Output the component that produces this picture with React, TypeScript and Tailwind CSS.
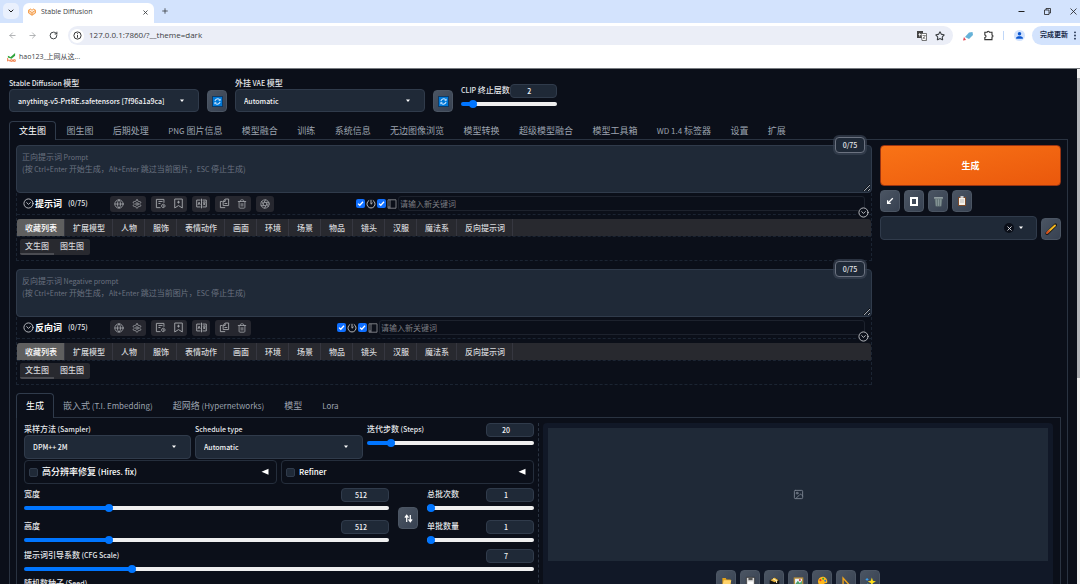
import { Fragment, useState, type ReactNode } from "react";
import { LuGlobe, LuSettings, LuImage, LuChevronDown, LuTrash2, LuAperture } from "react-icons/lu";
import { Star, RotateCw, ArrowLeft, ArrowRight, X, Plus, CircleChevronDown } from "lucide-react";

const secondary =
  "flex h-[22px] w-5 shrink-0 items-center justify-center rounded-[4px] border border-[#4b5563] bg-gradient-to-br from-[#4b5563] to-[#374151] text-white";

/** Sets Latin runs one step smaller than the Chinese text around them. */
function Mixed({ text, latin = "text-[7px]" }: { text: string; latin?: string }) {
  return (
    <>
      {text.split(/([\x20-\x7e]{2,})/).map((run, i) =>
        i % 2 ? <span key={i} className={latin}>{run}</span> : <Fragment key={i}>{run}</Fragment>,
      )}
    </>
  );
}

function Select({ label, value, className = "", height = "h-6" }: { label: string; value: string; className?: string; height?: string }) {
  return (
    <label className={`flex flex-col text-[8px] leading-[12px] text-[#e5e7eb] ${className}`}>
      <span className="font-medium"><Mixed text={label} /></span>
      <span className="relative block">
        <select className={`block w-full appearance-none rounded-[4px] border border-[#303b4b] bg-[#1f2937] pl-2 text-[7px] font-medium text-[#f3f4f6] ${height}`}>
          <option>{value}</option>
        </select>
        <Caret className="pointer-events-none absolute top-[10px] right-[14px]" />
      </span>
    </label>
  );
}

function Caret({ className = "" }: { className?: string }) {
  return (
    <svg viewBox="0 0 6 4" className={`h-1 w-[6px] ${className}`}>
      <path d="M1 .5h4L3 3z" fill="#fff" />
    </svg>
  );
}

function Range({ label, initial, min, max }: { label: string; initial: number; min: number; max: number }) {
  const [value, setValue] = useState(initial);
  const pct = ((value - min) / (max - min)) * 100;
  return (
    <input
      type="range"
      aria-label={label}
      min={min}
      max={max}
      value={value}
      onChange={(e) => setValue(Number(e.target.value))}
      style={{ backgroundImage: `linear-gradient(to right, #0075ff ${pct}%, #efefef ${pct}%)` }}
      className="block h-1 w-full appearance-none rounded-full [&::-webkit-slider-thumb]:size-2 [&::-webkit-slider-thumb]:appearance-none [&::-webkit-slider-thumb]:rounded-full [&::-webkit-slider-thumb]:bg-[#0075ff]"
    />
  );
}

function Slider({ label, value, min, max }: { label: string; value: number; min: number; max: number }) {
  return (
    <div className="flex flex-col gap-1">
      <div className="flex items-start justify-between">
        <span className="shrink-0 text-[8px] leading-[11px] font-medium whitespace-nowrap text-[#e5e7eb]"><Mixed text={label} /></span>
        <input
          aria-label={label}
          defaultValue={value}
          className="h-[14px] w-12 min-w-0 rounded-[4px] border border-[#303b4b] bg-[#1f2937] pr-2 text-center text-[7px] font-medium text-[#f3f4f6]"
        />
      </div>
      <Range label={label} initial={value} min={min} max={max} />
    </div>
  );
}

function RefreshEmoji() {
  return (
    <svg viewBox="0 0 12 12" className="size-[11px]">
      <rect x=".5" y=".5" width="11" height="11" fill="#0078d7" stroke="#10375f" />
      <path d="M3.2 5.5A3 3 0 0 1 8.300 4M8.800 6.500A3 3 0 0 1 3.700 8" fill="none" stroke="#cfe8ff" strokeWidth="1.2" />
      <path d="M9.400 2.600v2.600H6.800zM2.600 9.400V6.800h2.600z" fill="#cfe8ff" />
    </svg>
  );
}

const mainTabs = ["文生图", "图生图", "后期处理", "PNG 图片信息", "模型融合", "训练", "系统信息", "无边图像浏览", "模型转换", "超级模型融合", "模型工具箱", "WD 1.4 标签器", "设置", "扩展"];
const categories = ["收藏列表", "扩展模型", "人物", "服饰", "表情动作", "画面", "环境", "场景", "物品", "镜头", "汉服", "魔法系", "反向提示词"];

function IconGroup({ children }: { children: ReactNode }) {
  return <div className="flex h-4 items-center rounded-[3px] bg-[#26272f] text-[#a0a2a7]">{children}</div>;
}

function IconButton({ label, children }: { label: string; children: ReactNode }) {
  return (
    <button aria-label={label} className="flex h-4 w-[18px] items-center justify-center">
      {children}
    </button>
  );
}

function Glyph({ d }: { d: string }) {
  return (
    <svg viewBox="0 0 16 16" className="size-[11px]" fill="none" stroke="currentColor" strokeWidth="1.400">
      <path d={d} />
    </svg>
  );
}

function Tick({ label }: { label: string }) {
  return (
    <span className="relative block size-[9px]">
      <input type="checkbox" defaultChecked aria-label={label} className="block size-[9px] appearance-none rounded-[2px] bg-[#0f6fff]" />
      <svg viewBox="0 0 9 9" className="pointer-events-none absolute inset-0 size-[9px]">
        <path d="M2 4.6 3.8 6.3 7 2.8" fill="none" stroke="#fff" strokeWidth="1.3" />
      </svg>
    </span>
  );
}

const promptHint = "(按 Ctrl+Enter 开始生成，Alt+Enter 跳过当前图片，ESC 停止生成)";

function PromptBlock({ title, hint, extra, inputWidth }: { title: string; hint: string; extra?: boolean; inputWidth: string }) {
  return (
    <section className="relative">
      <div className="relative">
        <textarea
          aria-label={hint}
          placeholder=" "
          className="peer block h-12 w-full resize rounded-[4px] border border-[#303b4b] bg-[#1f2937] px-[5px] py-[5px] text-[8px] leading-[12px]"
        />
        <div className="pointer-events-none absolute top-[6px] left-[6px] hidden text-[8px] leading-[12px] text-[#6b7280] peer-placeholder-shown:block">
          <p><Mixed text={hint} /></p>
          <p><Mixed text={promptHint} /></p>
        </div>
      </div>
      <span className="absolute -top-2 right-[7px] flex h-4 w-[30px] items-center justify-center rounded-[4px] border border-[#6b7280] bg-[#1f2937] text-[7px] font-medium text-[#e5e7eb] ring-2 ring-[#374151]/70">
        0/75
      </span>
      <div className="border-x border-b border-dashed border-[#1b2432]">
        <div className="relative flex h-[22px] items-center justify-between border-b border-dashed border-[#1b2432] pr-[6px] pl-[6px]">
          <div className="flex items-center">
            <CircleChevronDown className="size-[11px] text-[#c4c6ca]" strokeWidth={2} />
            <h2 className="pl-px text-[9px] leading-4 font-bold text-white">{title}</h2>
            <span className="w-12 pl-[6px] text-[7px] font-medium text-[#e5e7eb]">(0/75)</span>
            <div className="flex gap-[5px]">
              <IconGroup>
                <IconButton label="语言"><LuGlobe className="size-[10px]" /></IconButton>
                <IconButton label="设置"><LuSettings className="size-[10px]" /></IconButton>
              </IconGroup>
              <IconGroup>
                <IconButton label="历史"><Glyph d="M8 14H2V2h11v5M5 5h6M5 8h3M12 9a2.500 2.500 0 1 0 .1 0M12 10.500v1.500h1.500" /></IconButton>
                <IconButton label="收藏"><Glyph d="M2.500 14.500V1.500h11v13L8 11zM8 4v4M6 6h4" /></IconButton>
              </IconGroup>
              <IconGroup>
                <IconButton label="翻译"><Glyph d="M6.500 3H1v10h5.500M9.500 3H15v10H9.500M8 1v14M3 10l1.500-4L6 10M10 6h4M12 5v1M10.500 10.500 13.500 7M10.500 7l3 3.500" /></IconButton>
              </IconGroup>
              <IconGroup>
                <IconButton label="复制"><Glyph d="M5 5H2v9h7M6 11V5l3-3.500h5V11zM9 2v3H6M8 8h4" /></IconButton>
                <IconButton label="清空"><LuTrash2 className="size-[10px]" /></IconButton>
              </IconGroup>
              {extra && (
                <IconGroup>
                  <IconButton label="生成提示词"><LuAperture className="size-[10px]" /></IconButton>
                </IconGroup>
              )}
            </div>
          </div>
          <div className={`flex items-center gap-px ${inputWidth}`}>
            <Tick label="自动翻译" />
            <svg viewBox="0 0 10 10" className="size-[10px] shrink-0" fill="none" stroke="#b5b7ba">
              <path d="M3.200 1.400a4 4 0 1 0 3.600 0M5 .8v4.400l1.600-1.400" strokeWidth="1" />
            </svg>
            <Tick label="自动补全" />
            <svg viewBox="0 0 10 10" className="size-[10px] shrink-0" fill="none" stroke="#85878c">
              <path d="M1 .8h8v8.400H1zM3 .8v8.400M1 8h2" strokeWidth=".9" />
            </svg>
            <input
              aria-label="新关键词"
              placeholder="请输入新关键词"
              className="h-[15px] min-w-0 flex-1 rounded-[3px] border border-[#1d222d] bg-transparent px-px text-[8px] placeholder:text-[#7b7d82]"
            />
          </div>
          <button aria-label="展开" className="absolute right-[2px] -bottom-1 rounded-full bg-[#0b0f19]">
            <CircleChevronDown className="size-[11px] text-[#c4c6ca]" strokeWidth={2} />
          </button>
        </div>
        <div className="mt-1 flex h-[17px] overflow-hidden rounded-t-[3px] bg-[#28292f] text-[8px] font-medium text-[#d6d7da]">
          {categories.map((c, i) => (
            <button key={c} className={`border-r border-[#363740] pr-[7px] pl-2 whitespace-nowrap ${i === 0 ? "bg-[#5f5f5f] text-white" : ""}`}>
              {c}
            </button>
          ))}
        </div>
        <div className="border-t border-dashed border-[#1b2432] px-[3px] pt-[2px] pb-[5px]">
          <div className="flex w-max overflow-hidden rounded-[2px] bg-[#28292f] text-[8px] font-medium text-[#d6d7da]">
            <button className="h-4 border-b-2 border-[#4b4c52] px-[5px] leading-[14px]">文生图</button>
            <button className="h-4 border-b-2 border-transparent px-[6px] leading-[14px]">图生图</button>
          </div>
        </div>
      </div>
    </section>
  );
}

function Accordion({ title }: { title: string }) {
  return (
    <div className="flex h-6 items-center rounded-[4px] border border-[#252e3c] px-1">
      <label className="flex flex-1 items-center gap-1 text-[9px] leading-4 font-medium text-white">
        <input type="checkbox" className="size-[9px] appearance-none rounded-[2px] border border-[#303b4b] bg-[#1f2937]" />
        <span><Mixed text={title} latin="text-[8px]" /></span>
      </label>
      <button aria-label={`展开 ${title}`} className="pr-[3px]">
        <svg viewBox="0 0 8 8" className="size-2"><path d="M7.500.8v6L.5 3.800z" fill="#fff" /></svg>
      </button>
    </div>
  );
}

const outputTools: { label: string; icon: ReactNode }[] = [
  { label: "打开文件夹", icon: <><path d="M2 3h5l1 2h6v9H2z" fill="#e3a21a" /><path d="M4 6h11l-2 8H2z" fill="#ffd36b" /></> },
  { label: "保存", icon: <><path d="M2 2h12v13H2z" fill="#d9d9d9" stroke="#222" /><path d="M5 2h6v4H5z" fill="#555" /><path d="M4 8h8v6H4z" fill="#fff" /></> },
  { label: "保存压缩包", icon: <><path d="M1 6l7-4 7 4v8H1z" fill="#161616" /><path d="M2 6l6-4 6 4-6 3z" fill="#e5b23a" /><path d="M6 4l5 3v3" stroke="#fff0bd" strokeWidth="1.5" fill="none" /></> },
  { label: "图生图", icon: <><path d="M1 2h14v13H1z" fill="#b98f3c" /><path d="M3 4h10v9H3z" fill="#e8f4fa" /><path d="M3 12l4-5 3 3 3-3v6H3z" fill="#4ea06a" /><circle cx="10" cy="6" r="1.5" fill="#d84b4b" /></> },
  { label: "局部重绘", icon: <><path d="M8 1a7 7 0 1 0 1 14c2 0 0-3 2-4s4 0 4-3c0-4-3-7-7-7z" fill="#ffb71b" /><circle cx="5" cy="6" r="1.5" fill="#d9352b" /><circle cx="9" cy="4" r="1.4" fill="#2e9e46" /><circle cx="12" cy="7" r="1.4" fill="#1e78d6" /></> },
  { label: "后期处理", icon: <path d="M3 3v11h10z" fill="none" stroke="#f0a51c" strokeWidth="2" /> },
  { label: "高清修复", icon: <><path d="M10 2l1.5 5L16 8l-4.500 2L10 15l-1.500-5L4 8l4.500-1z" fill="#ffdf1b" /><path d="M3 3v4M1 5h4" stroke="#3aa0ee" strokeWidth="1.500" /><circle cx="4" cy="12" r="1.200" fill="#3ac1ee" /></> },
];

function BrowserChrome() {
  return (
    <header className="shrink-0 border-b border-[#777b80] bg-white font-['Open_Sans','Noto_Sans_CJK_SC',sans-serif] text-[#3c4043]">
      <div className="flex h-[23px] items-start bg-[#d3e3fd]">
        <button aria-label="搜索标签页" className="mt-[3px] ml-[3px] flex size-4 items-center justify-center rounded-[5px] bg-[#e9f0fd] text-[#1f1f1f]">
          <LuChevronDown className="size-[8px]" strokeWidth={3} />
        </button>
        <div className="mt-[3px] ml-1 flex h-5 w-[131px] items-center rounded-t-[6px] bg-white px-[5px] pb-[2px]">
          <svg viewBox="0 0 16 16" className="size-[8px] shrink-0" fill="#fbd3ae" stroke="#f39a45" strokeWidth="1.800">
            <path d="M1 4.500 5 2l3 2.500L11 2l4 2.500v5.500L8 14.500 1 10zM1 4.500l7 4.500 7-4.500M8 9v5.500" />
          </svg>
          <span className="flex-1 pl-[5px] text-[7px]">Stable Diffusion</span>
          <button aria-label="关闭标签页"><X className="size-[7px]" strokeWidth={3} /></button>
        </div>
        <button aria-label="新标签页" className="mt-[7px] ml-[7px]"><Plus className="size-2" strokeWidth={2.5} /></button>
        <div className="mt-2 mr-[3px] ml-auto flex gap-[19px] text-[#1f1f1f]">
          <button aria-label="最小化"><svg viewBox="0 0 7 7" className="size-[7px]"><path d="M.5 3.500h6" stroke="currentColor" /></svg></button>
          <button aria-label="还原"><svg viewBox="0 0 7 7" className="size-[7px]" fill="none" stroke="currentColor" strokeWidth=".8"><path d="M.5 2h4.500v4.500H.5zM2 2V.5h4.500V5H5" /></svg></button>
          <button aria-label="关闭"><svg viewBox="0 0 7 7" className="size-[7px]"><path d="M.5.5l6 6M6.500.5l-6 6" stroke="currentColor" strokeWidth=".8" /></svg></button>
        </div>
      </div>
      <div className="flex h-[25px] items-center pl-2">
        <button aria-label="后退" className="text-[#9a9c9f]"><ArrowLeft className="size-[9px]" /></button>
        <button aria-label="前进" className="ml-[11px] text-[#9a9c9f]"><ArrowRight className="size-[9px]" /></button>
        <button aria-label="刷新" className="ml-3"><RotateCw className="size-[9px]" strokeWidth={2.600} /></button>
        <div className="ml-[10px] flex h-[19px] flex-1 items-center rounded-full bg-[#ebeef7] pr-2 pl-[2px]">
          <span className="flex size-[14px] items-center justify-center rounded-full bg-white">
            <svg viewBox="0 0 10 10" className="size-[9px]" fill="none" stroke="#222"><circle cx="5" cy="5" r="4" /><path d="M5 4.500v3M5 2.500v1" /></svg>
          </span>
          <input aria-label="地址" defaultValue="127.0.0.1:7860/?__theme=dark" className="min-w-0 flex-1 bg-transparent pb-px pl-[5px] text-[8px]" />
          <button aria-label="翻译此页">
            <svg viewBox="0 0 10 10" className="size-[10px]"><path d="M0 0h6v7H0z" fill="#444" /><path d="M4 2.500h5.500v7H5z" fill="#fff" stroke="#555" strokeWidth=".8" /><path d="M1.500 3.500h2.500M2.700 2v3.500" stroke="#fff" strokeWidth=".8" /><path d="M5.500 4.500h3L6 8M6 6l2.500 2" stroke="#555" strokeWidth=".7" fill="none" /></svg>
          </button>
          <button aria-label="收藏" className="ml-2"><Star className="size-[10px]" strokeWidth={2.500} /></button>
        </div>
        <svg viewBox="0 0 10 10" className="ml-[10px] size-[10px]"><path d="M2 6 6 1.500l3.500-.5.5 3L6 8z" fill="#66b2d8" /><path d="M0 9.500l1-3.500 2 3z" fill="#e34b57" /></svg>
        <button aria-label="扩展程序" className="ml-[10px]">
          <svg viewBox="0 0 12 12" className="size-[11px]" fill="none" stroke="#333" strokeWidth="1.200"><path d="M2 2.500h2.500c0-1.600 2.500-1.600 2.500 0h2.800v3c1.400 0 1.400 2.300 0 2.300v2.700H2V8.200c1.700 0 1.700-2.700 0-2.700z" /></svg>
        </button>
        <span className="ml-[9px] h-[9px] w-px bg-[#c0d7f8]" />
        <svg viewBox="0 0 12 12" className="ml-[10px] size-[11px]"><circle cx="6" cy="6" r="6" fill="#d3e3fd" /><circle cx="6" cy="4.200" r="1.900" fill="#0b57d0" /><path d="M2.300 9.500V8.700C2.300 7.500 4 6.800 6 6.800s3.700.7 3.700 1.900v.8z" fill="#0b57d0" /></svg>
        <button className="ml-[7px] flex h-[19px] items-center rounded-l-full bg-[#d3e3fd] pr-1 pl-2 text-[7px] font-semibold text-[#1b2b49]">
          完成更新
          <svg viewBox="0 0 2 10" className="ml-[6px] h-[9px] w-[2px]" fill="#1b2b49"><circle cx="1" cy="1.500" r="1" /><circle cx="1" cy="5" r="1" /><circle cx="1" cy="8.500" r="1" /></svg>
        </button>
      </div>
      <div className="flex h-5 items-center pb-[2px] pl-[7px]">
        <a href="#hao123" className="flex items-center gap-[3px] text-[7px]">
          <svg viewBox="0 0 10 10" className="size-[9px]"><path d="M1 3 4 4.500 9 0v3L5 6.500 1 5z" fill="#2fa33b" /><path d="M.7 5.500v3.800M.7 8h2v1.300M4 7.500h2v1.800H4zM7.200 7.500h2v1.800h-2z" fill="none" stroke="#ef6a2c" strokeWidth=".9" /></svg>
          hao123_上网从这...
        </a>
      </div>
    </header>
  );
}

export default function App() {
  return (
    <div className="flex h-screen flex-col overflow-hidden bg-[#0b0f19]">
      <BrowserChrome />
      <div className="flex min-h-0 flex-1">
        <main className="min-w-0 flex-1 overflow-hidden px-[9px] pt-2 font-['Noto_Sans_CJK_SC',sans-serif] text-[#e5e7eb]">
          <div className="flex items-end gap-2">
            <Select label="Stable Diffusion 模型" value="anything-v5-PrtRE.safetensors [7f96a1a9ca]" className="w-[190px]" height="h-[23px]" />
            <button aria-label="刷新模型" className={secondary}><RefreshEmoji /></button>
            <Select label="外挂 VAE 模型" value="Automatic" className="w-[190px]" height="h-[23px]" />
            <button aria-label="刷新 VAE" className={secondary}><RefreshEmoji /></button>
            <div className="w-24 pb-[6px]">
              <Slider label="CLIP 终止层数" value={2} min={1} max={12} />
            </div>
          </div>

          <nav className="relative mt-[9px] -mb-px flex w-[786px] justify-between text-[9px] text-[#9ca3af]">
            {mainTabs.map((t, i) => (
              <button
                key={t}
                className={`h-[19px] rounded-t-[4px] border border-b-0 leading-[18px] whitespace-nowrap ${i === 0 ? "border-[#303b4b] bg-[#0b0f19] px-[9px] text-white" : "border-transparent px-2"}`}
              >
                <Mixed text={t} latin="text-[8px]" />
              </button>
            ))}
          </nav>

          <div className="border border-[#2a3341] px-[6px] pt-[5px] pb-4">
            <div className="flex gap-2">
              <div className="flex min-w-0 flex-1 flex-col gap-2">
                <PromptBlock title="提示词" hint="正向提示词 Prompt" extra inputWidth="w-[509px]" />
                <PromptBlock title="反向词" hint="反向提示词 Negative prompt" inputWidth="w-[528px]" />
              </div>
              <aside className="w-[181px] shrink-0">
                <button className="h-[41px] w-full rounded-[4px] border border-[#9a3412] bg-gradient-to-br from-[#f97316] to-[#ea580c] text-[9px] font-bold text-white">生成</button>
                <div className="mt-1 flex gap-1">
                  <button aria-label="读取参数" className={secondary}>
                    <svg viewBox="0 0 10 10" className="size-2" fill="none" stroke="#fff" strokeWidth="1.600"><path d="M8.500 1.500 2.500 7.500M2 4v4h4" /></svg>
                  </button>
                  <button aria-label="清空" className={secondary}><span className="block h-[9px] w-2 border-2 border-white" /></button>
                  <button aria-label="删除" className={secondary}>
                    <svg viewBox="0 0 10 10" className="size-[11px]"><path d="M1 1h8v1.500H1z" fill="#9aa6a8" /><path d="M1.500 2.500h7l-1 7h-5z" fill="#667779" /><path d="M3 3v6M5 3v6M7 3v6" stroke="#a4b0b2" strokeWidth=".5" /></svg>
                  </button>
                  <button aria-label="粘贴" className={secondary}>
                    <svg viewBox="0 0 10 10" className="size-[10px]"><path d="M1 1h8v9H1z" fill="#7b4a2b" /><path d="M2 2h6v7H2z" fill="#f5f0e8" /><path d="M3.500 0h3v2h-3z" fill="#ccc" /><path d="M3 4h4M3 6h4" stroke="#999" strokeWidth=".6" /></svg>
                  </button>
                </div>
                <div className="mt-1 flex items-end gap-1">
                  <div className="relative flex-1">
                    <select aria-label="预设样式" className="block h-6 w-full appearance-none rounded-[4px] border border-[#303b4b] bg-[#1f2937]"><option></option></select>
                    <span className="pointer-events-none absolute inset-y-0 right-[13px] flex items-center gap-1">
                      <span className="flex size-[10px] items-center justify-center rounded-full bg-[#0b0f19]"><X className="size-[7px]" strokeWidth={3} /></span>
                      <Caret />
                    </span>
                  </div>
                  <button aria-label="编辑样式" className={secondary}>
                    <svg viewBox="0 0 12 12" className="size-[12px]"><path d="M2 10.500 10.500 2" stroke="#1c1c1c" strokeWidth="3.200" strokeLinecap="round" /><path d="M3.500 8.500 10 2.500" stroke="#f5b81f" strokeWidth="1.900" strokeLinecap="round" /><path d="M2 10l2-2" stroke="#d9531e" strokeWidth="2" strokeLinecap="round" /></svg>
                  </button>
                </div>
              </aside>
            </div>

            <nav className="relative mt-2 -mb-px flex text-[9px] text-[#9ca3af]">
              {["生成", "嵌入式 (T.I. Embedding)", "超网络 (Hypernetworks)", "模型", "Lora"].map((t, i) => (
                <button key={t} className={`h-[25px] rounded-t-[4px] pl-[9px] whitespace-nowrap ${i === 0 ? "border border-b-0 border-[#303b4b] bg-[#0b0f19] pr-[9px] text-white" : "pr-[11px]"}`}>
                  <Mixed text={t} latin="text-[8px]" />
                </button>
              ))}
            </nav>
            <div className="flex border border-[#2a3341] px-[7px] pt-[5px] pb-2">
              <div className="w-[510px] shrink-0">
                <div className="flex gap-1">
                  <Select label="采样方法 (Sampler)" value="DPM++ 2M" className="w-[167px]" />
                  <Select label="Schedule type" value="Automatic" className="w-[168px]" />
                  <div className="flex-1"><Slider label="迭代步数 (Steps)" value={20} min={1} max={150} /></div>
                </div>
                <div className="mt-px grid grid-cols-2 gap-1">
                  <Accordion title="高分辨率修复 (Hires. fix)" />
                  <Accordion title="Refiner" />
                </div>
                <div className="mt-1 flex items-end">
                  <div className="flex flex-1 flex-col gap-[10px]">
                    <Slider label="宽度" value={512} min={64} max={2048} />
                    <Slider label="高度" value={512} min={64} max={2048} />
                  </div>
                  <div className="px-[9px] pb-[13px]">
                    <button aria-label="交换宽高" className={secondary}>
                      <svg viewBox="0 0 10 10" className="size-[9px]" fill="none" stroke="#fff" strokeWidth="1.400"><path d="M3 9V2M1 4l2-2.500L5 4M7 1v7M5 6l2 2.500L9 6" /></svg>
                    </button>
                  </div>
                  <div className="flex w-[107px] flex-col gap-[10px]">
                    <Slider label="总批次数" value={1} min={1} max={100} />
                    <Slider label="单批数量" value={1} min={1} max={8} />
                  </div>
                </div>
                <div className="mt-[7px]"><Slider label="提示词引导系数 (CFG Scale)" value={7} min={1} max={30} /></div>
                <label className="mt-[6px] block text-[8px] leading-[12px] font-medium">
                  <Mixed text="随机数种子 (Seed)" />
                  <input type="number" defaultValue={-1} className="block h-6 w-full rounded-[4px] border border-[#303b4b] bg-[#1f2937] px-2 text-[7px]" />
                </label>
              </div>
              <div className="mx-1 border-l border-dashed border-[#2a3341]" />
              <div className="flex-1 rounded-t-[4px] bg-[#111827] px-[5px] pt-[5px]">
                <div className="flex h-[133px] items-center justify-center bg-[#1f2937] text-[#7b8390]"><LuImage className="size-[11px]" /></div>
                <div className="mt-[9px] flex justify-center gap-1">
                  {outputTools.map((t) => (
                    <button key={t.label} aria-label={t.label} className={secondary}>
                      <svg viewBox="0 0 16 16" className="size-[11px]">{t.icon}</svg>
                    </button>
                  ))}
                </div>
              </div>
            </div>
          </div>
        </main>
        <div className="w-[3px] shrink-0 bg-[#f1f1f1] pt-[9px]"><div className="h-[300px] bg-[#b4b6ba]" /></div>
      </div>
    </div>
  );
}
